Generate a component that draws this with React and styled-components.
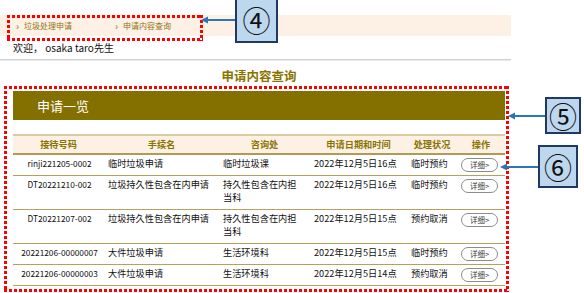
import React from 'react';
import styled, { createGlobalStyle, css } from 'styled-components';

const GlobalStyle = createGlobalStyle`
    body {
        margin: 0;
        background: #fff;
        font-family: "Noto Sans CJK SC", "Noto Sans", sans-serif;
        color: #222;
    }
`;

const dotted = css`
    background:
        linear-gradient(90deg, #f00 3px, transparent 3px) 0 0 / 5px 3px repeat-x,
        linear-gradient(90deg, #f00 3px, transparent 3px) 0 100% / 5px 3px repeat-x,
        linear-gradient(180deg, #f00 3px, transparent 3px) 0 0 / 3px 5px repeat-y,
        linear-gradient(180deg, #f00 3px, transparent 3px) 100% 0 / 3px 5px repeat-y;
`;

const Page = styled.div`
    position: relative;
    width: 584px;
    height: 293px;
    overflow: hidden;
`;

const Main = styled.div`
    width: 511px;
    padding-top: 15px;
`;

const BreadBar = styled.nav`
    height: 21px;
    background: #fdf0e5;
    display: flex;
    align-items: center;
    padding-left: 16px;
`;

const Crumb = styled.span`
    display: flex;
    align-items: center;
    gap: 5px;
    width: 99px;
    font-size: 8px;
    color: #8f7414;
    white-space: nowrap;
`;

const Chevron = styled.span`
    font-size: 10px;
    line-height: 1;
`;

const Welcome = styled.div`
    margin-top: 5px;
    padding-left: 13px;
    font-size: 10px;
    line-height: 14px;
    color: #111;
`;

const Divider = styled.hr`
    margin: 4px 0 0;
    border: 0;
    border-top: 1px solid #cfcfcf;
    box-shadow: 0 1px 1px #e8e8e8;
`;

const Title = styled.h1`
    margin: 8px 6px 0 13px;
    text-align: center;
    font-size: 12.5px;
    line-height: 16px;
    font-weight: bold;
    color: #8a7400;
`;

const Section = styled.section`
    position: relative;
    margin: 7px 6px 0 13px;
`;

const Frame = styled.div`
    position: absolute;
    left: -9px;
    right: -4px;
    top: -5px;
    bottom: -6px;
    pointer-events: none;
    ${dotted}
`;

const ListHeader = styled.div`
    height: 29px;
    background: #847000;
    color: #fff;
    font-size: 13px;
    display: flex;
    align-items: center;
    padding-left: 24px;
`;

const Table = styled.table`
    margin-top: 14px;
    width: 492px;
    border-collapse: collapse;
    table-layout: fixed;
    font-size: 9.2px;
    line-height: 13px;
`;

const HeadRow = styled.tr`
    background: #fdf0e4;
    border-top: 2px solid #dccca6;
    border-bottom: 2px solid #ae9b55;
`;

const Th = styled.th`
    padding: 2px 0 2px;
    text-align: center;
    font-weight: bold;
    color: #8a7400;
`;

const Row = styled.tr`
    border-bottom: 1.5px solid #b3a15e;
`;

const Td = styled.td`
    vertical-align: top;
    padding: 2px ${p => p.$padRight || 4}px ${p => (p.$button ? 3 : 5)}px 4px;
    text-align: ${p => (p.$center ? 'center' : 'left')};
    color: #111;
`;

const IdCell = styled(Td)`
    font-size: 8.3px;
`;

const DetailButton = styled.button`
    display: block;
    margin-top: 1px;
    width: 37px;
    height: 14px;
    padding: 0;
    border: 1px solid #8c8c8c;
    border-radius: 8px;
    background: #fff;
    font-family: inherit;
    font-size: 7.5px;
    line-height: 12px;
    color: #333;
`;

const CrumbFrame = styled.div`
    position: absolute;
    left: 7px;
    top: 15px;
    width: 196px;
    height: 26px;
    ${dotted}
`;

const Callout = styled.div`
    position: absolute;
    left: ${p => p.$x}px;
    top: ${p => p.$y}px;
    display: flex;
    align-items: center;
`;

const Arrow = styled.svg`
    display: block;
`;

const Badge = styled.div`
    width: ${p => p.$w}px;
    height: ${p => p.$h}px;
    box-sizing: border-box;
    border: 2px solid #203864;
    background: #bdd7ee;
    display: flex;
    align-items: center;
    justify-content: center;
    font-size: 28px;
    line-height: 1;
    color: #111;
`;

const columns = [
    { label: '接待号码', width: 91 },
    { label: '手续名', width: 115 },
    { label: '咨询处', width: 91 },
    { label: '申请日期和时间', width: 97 },
    { label: '处理状况', width: 50 },
    { label: '操作', width: 48 },
];

const rows = [
    ['rinji221205-0002', '临时垃圾申请', '临时垃圾课', '2022年12月5日16点', '临时预约'],
    ['DT20221210-002', '垃圾持久性包含在内申请', '持久性包含在内担当科', '2022年12月5日16点', '临时预约'],
    ['DT20221207-002', '垃圾持久性包含在内申请', '持久性包含在内担当科', '2022年12月5日15点', '预约取消'],
    ['20221206-00000007', '大件垃圾申请', '生活环境科', '2022年12月5日15点', '临时预约'],
    ['20221206-00000003', '大件垃圾申请', '生活环境科', '2022年12月5日14点', '预约取消'],
];

const callouts = [
    { n: '④', x: 201, y: -4, len: 34, w: 43, h: 47 },
    { n: '⑤', x: 508, y: 97, len: 37, w: 36, h: 37 },
    { n: '⑥', x: 500, y: 145, len: 38, w: 40, h: 43 },
];

function App() {
    return (
        <Page>
            <GlobalStyle />
            <Main>
                <BreadBar>
                    <Crumb><Chevron>›</Chevron>垃圾处理申请</Crumb>
                    <Crumb><Chevron>›</Chevron>申请内容查询</Crumb>
                </BreadBar>
                <Welcome>欢迎， osaka taro先生</Welcome>
                <Divider />
                <Title>申请内容查询</Title>
                <Section>
                    <ListHeader>申请一览</ListHeader>
                    <Table>
                        <colgroup>
                            {columns.map(c => <col key={c.label} width={c.width} />)}
                        </colgroup>
                        <thead>
                            <HeadRow>
                                {columns.map(c => <Th key={c.label}>{c.label}</Th>)}
                            </HeadRow>
                        </thead>
                        <tbody>
                            {rows.map(r => (
                                <Row key={r[0]}>
                                    <IdCell $center $padRight={2}>{r[0]}</IdCell>
                                    <Td>{r[1]}</Td>
                                    <Td $padRight={10}>{r[2]}</Td>
                                    <Td>{r[3]}</Td>
                                    <Td>{r[4]}</Td>
                                    <Td $button><DetailButton>详细&gt;</DetailButton></Td>
                                </Row>
                            ))}
                        </tbody>
                    </Table>
                    <Frame />
                </Section>
            </Main>
            <CrumbFrame />
            {callouts.map(c => (
                <Callout key={c.n} $x={c.x} $y={c.y}>
                    <Arrow width={c.len} height="10" viewBox={`0 0 ${c.len} 10`}>
                        <line x1="5" y1="5" x2={c.len} y2="5" stroke="#2e75b6" strokeWidth="2" />
                        <polygon points="0,5 7,1.5 7,8.5" fill="#2e75b6" />
                    </Arrow>
                    <Badge $w={c.w} $h={c.h}>{c.n}</Badge>
                </Callout>
            ))}
        </Page>
    );
}

export default App;
